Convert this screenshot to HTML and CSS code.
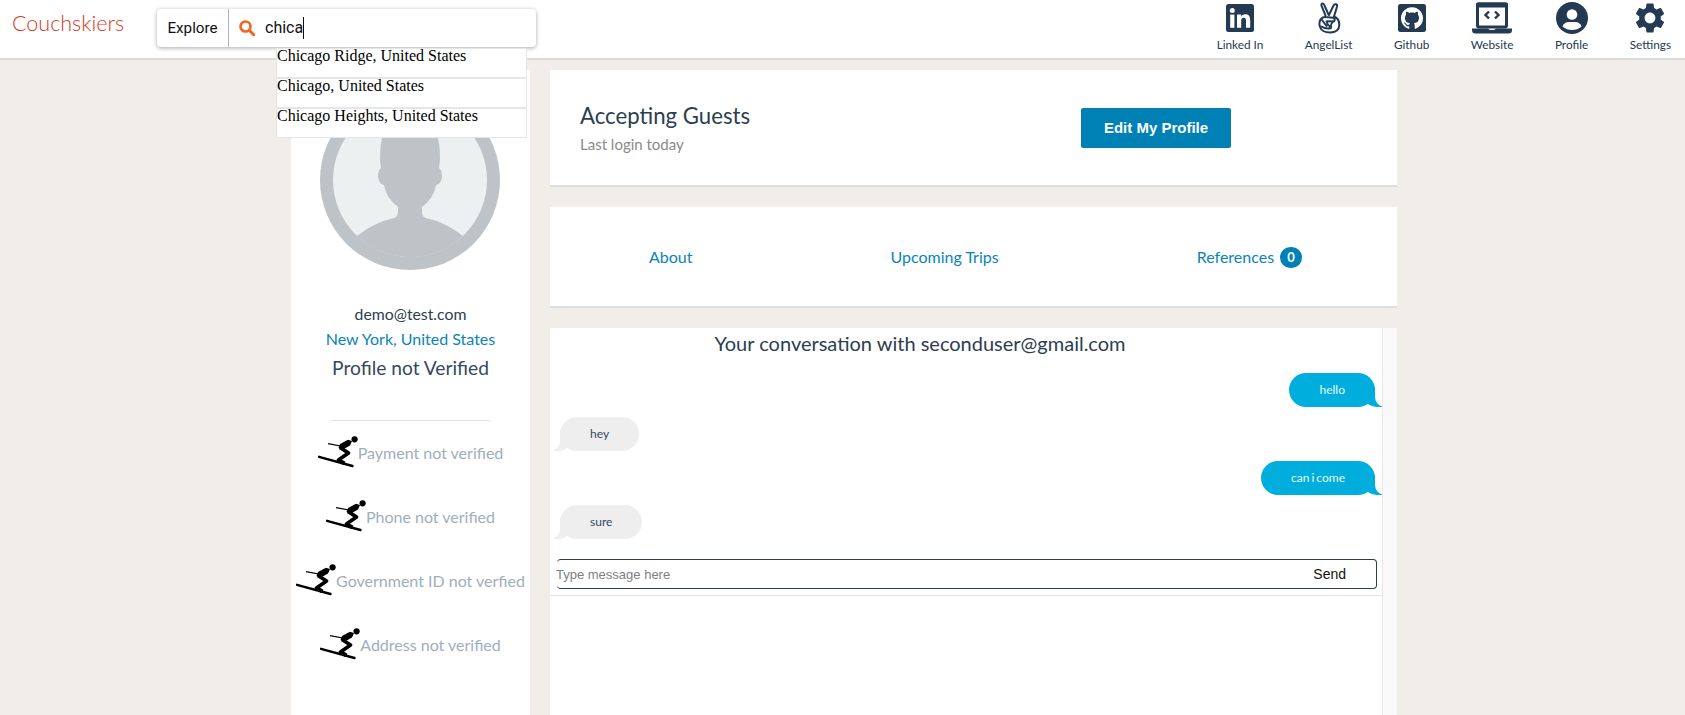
FILE: index.html
```html
<!DOCTYPE html>
<html lang="en">
<head>
    <meta charset="UTF-8">
    <meta name="viewport" content="width=device-width, initial-scale=1.0">
    <title>Couchskiers</title>
    <link rel="stylesheet" href="styles.css">
</head>
<body>
    <svg class="defs" width="0" height="0">
        <symbol id="skier" viewBox="0 0 40 32">
            <circle cx="36.6" cy="3.3" r="3.1"/>
            <path d="M1 20.8L34.5 30" stroke="#000" stroke-width="2.4" stroke-linecap="round" fill="none"/>
            <path d="M10 7.6L28 11" stroke="#000" stroke-width="1.2" fill="none"/>
            <path d="M34 5L32 9.5L25 13.5L20.5 12L22 8L30 3.8Z"/>
            <path d="M22 11.5L30.5 17L20.5 24L26.5 27.5" stroke="#000" stroke-width="3.8" stroke-linejoin="round" fill="none"/>
        </symbol>
    </svg>

    <header class="topbar">
        <a class="logo" href="#">Couchskiers</a>
        <div class="search">
            <span class="search-label">Explore</span>
            <svg class="search-icon" viewBox="0 0 16 16" width="16" height="16">
                <circle cx="6.5" cy="6.5" r="5" fill="none" stroke="#f26522" stroke-width="2.6"/>
                <path d="M10.3 10.3L15 15" stroke="#f26522" stroke-width="3" stroke-linecap="round"/>
            </svg>
            <span class="search-text">chica</span>
            <ul class="suggestions">
                <li>Chicago Ridge, United States</li>
                <li>Chicago, United States</li>
                <li>Chicago Heights, United States</li>
            </ul>
        </div>
        <nav class="icons">
            <a href="#">
                <svg viewBox="0 0 28 28" width="28" height="28">
                    <rect width="28" height="28" rx="2.5" fill="#233a52"/>
                    <g fill="#fff">
                        <rect x="4.2" y="10.6" width="4.2" height="13.2"/>
                        <circle cx="6.3" cy="6.4" r="2.5"/>
                        <path d="M11 10.6h4v1.9c.7-1.2 2.2-2.2 4.3-2.2 4 0 4.9 2.6 4.9 6.1v7.4H20v-6.6c0-1.6-.1-3.5-2.2-3.5-2.2 0-2.6 1.7-2.6 3.4v6.7H11z"/>
                    </g>
                </svg>
                <span>Linked In</span>
            </a>
            <a href="#">
                <svg viewBox="0 0 24 31" width="24" height="31">
                    <g fill="none" stroke="#233a52" stroke-width="2" stroke-linejoin="round" stroke-linecap="round">
                        <path d="M8.5 13L4.5 3.2Q4 1.2 5.5 1.1Q6.8 1 7.5 3L11.5 12"/>
                        <path d="M12 12.5L16.5 3Q17.3 1.2 19 1.8Q20.5 2.4 20 4.2L17 14"/>
                        <path d="M17 14Q22.5 16 22.3 22.5Q22 30 13 30Q5 30 3 24.5Q1.5 19.5 4 16.5Q6 14 9 14.5L16 15.2Q18.8 16.5 17 19L10.5 18.8"/>
                        <path d="M5 17.5Q7.5 21 9.5 23.5M9.5 19Q10 22 13 24M15.5 19.5Q13.5 22 14 25M4.5 24Q9 27 14 25.5"/>
                    </g>
                </svg>
                <span>AngelList</span>
            </a>
            <a href="#">
                <svg viewBox="0 0 28 28" width="28" height="28">
                    <rect width="28" height="28" rx="2.5" fill="#233a52"/>
                    <g transform="translate(3 3) scale(.917)">
                        <path fill="#fff" d="M12 .297c-6.63 0-12 5.373-12 12 0 5.303 3.438 9.8 8.205 11.385.6.113.82-.258.82-.577 0-.285-.01-1.04-.015-2.04-3.338.724-4.042-1.61-4.042-1.61C4.422 18.07 3.633 17.7 3.633 17.7c-1.087-.744.084-.729.084-.729 1.205.084 1.838 1.236 1.838 1.236 1.07 1.835 2.809 1.305 3.495.998.108-.776.417-1.305.76-1.605-2.665-.3-5.466-1.332-5.466-5.93 0-1.31.465-2.38 1.235-3.22-.135-.303-.54-1.523.105-3.176 0 0 1.005-.322 3.3 1.23.96-.267 1.98-.399 3-.405 1.02.006 2.04.138 3 .405 2.28-1.552 3.285-1.23 3.285-1.23.645 1.653.24 2.873.12 3.176.765.84 1.23 1.91 1.23 3.22 0 4.61-2.805 5.625-5.475 5.92.42.36.81 1.096.81 2.22 0 1.606-.015 2.896-.015 3.286 0 .315.21.69.825.57C20.565 22.092 24 17.592 24 12.297c0-6.627-5.373-12-12-12"/>
                    </g>
                </svg>
                <span>Github</span>
            </a>
            <a href="#">
                <svg viewBox="0 0 40 31" width="40" height="31">
                    <rect x="5.5" y="1.5" width="29" height="23" rx="1.5" fill="none" stroke="#233a52" stroke-width="3"/>
                    <rect x="4" y="0" width="32" height="5" rx="1.5" fill="#233a52"/>
                    <path d="M17 9L13.5 12.5L17 16M23 9L26.5 12.5L23 16" fill="none" stroke="#233a52" stroke-width="2.4"/>
                    <path d="M0 26h16q1 1.6 4 1.6t4-1.6h16v1.5q0 3.5-3.5 3.5h-33q-3.5 0-3.5-3.5z" fill="#233a52"/>
                </svg>
                <span>Website</span>
            </a>
            <a href="#">
                <svg viewBox="0 0 32 32" width="32" height="32">
                    <circle cx="16" cy="16" r="16" fill="#233a52"/>
                    <circle cx="16" cy="12.5" r="5.3" fill="#fff"/>
                    <path d="M6.5 24.5Q8 20 13 20h6q5 0 6.5 4.5Q21.5 28 16 28t-9.5-3.5z" fill="#fff"/>
                </svg>
                <span>Profile</span>
            </a>
            <a href="#">
                <svg viewBox="2 1.5 20 21" width="30" height="31">
                    <path fill="#233a52" fill-rule="evenodd" d="M19.14 12.94c.04-.3.06-.61.06-.94 0-.32-.02-.64-.07-.94l2.03-1.58c.18-.14.23-.41.12-.61l-1.92-3.32c-.12-.22-.37-.29-.59-.22l-2.39.96c-.5-.38-1.03-.7-1.62-.94l-.36-2.54c-.04-.24-.24-.41-.48-.41h-3.84c-.24 0-.43.17-.47.41l-.36 2.54c-.59.24-1.13.57-1.62.94l-2.39-.96c-.22-.08-.47 0-.59.22L2.74 8.87c-.12.21-.08.47.12.61l2.03 1.58c-.05.3-.09.63-.09.94s.02.64.07.94l-2.03 1.58c-.18.14-.23.41-.12.61l1.92 3.32c.12.22.37.29.59.22l2.39-.96c.5.38 1.03.7 1.62.94l.36 2.54c.05.24.24.41.48.41h3.84c.24 0 .44-.17.47-.41l.36-2.54c.59-.24 1.13-.56 1.62-.94l2.39.96c.22.08.47 0 .59-.22l1.92-3.32c.12-.22.07-.47-.12-.61l-2.01-1.58zM12 15.6c-1.98 0-3.6-1.62-3.6-3.6s1.62-3.6 3.6-3.6 3.6 1.62 3.6 3.6-1.62 3.6-3.6 3.6z"/>
                </svg>
                <span>Settings</span>
            </a>
        </nav>
    </header>

    <div class="page">
        <aside class="sidebar">
            <svg class="avatar" viewBox="0 0 180 180" width="180" height="180">
                <circle cx="90" cy="90" r="90" fill="#bdc3c7"/>
                <circle cx="90" cy="90" r="77" fill="#ecf0f1"/>
                <path fill="#bdc3c7" d="M37 146Q55 132 74 128Q78 127 78 122L78 117Q66 108 64 95Q59 94 58 87Q58 80 61 78L60 70Q60 50 64 44Q72 28 90 28Q108 28 116 44Q120 50 120 70L119 78Q122 80 122 87Q121 94 116 95Q114 108 102 117L102 122Q102 127 106 128Q125 132 143 146A77 77 0 0 1 37 146Z"/>
            </svg>
            <div class="email">demo@test.com</div>
            <a class="location" href="#">New York, United States</a>
            <div class="verified">Profile not Verified</div>
            <hr class="divider">
            <ul class="checks">
                <li><svg width="40" height="32"><use href="#skier"/></svg>Payment not verified</li>
                <li><svg width="40" height="32"><use href="#skier"/></svg>Phone not verified</li>
                <li><svg width="40" height="32"><use href="#skier"/></svg>Government ID not verfied</li>
                <li><svg width="40" height="32"><use href="#skier"/></svg>Address not verified</li>
            </ul>
        </aside>

        <main class="content">
            <section class="card status">
                <div>
                    <h2>Accepting Guests</h2>
                    <p>Last login today</p>
                </div>
                <button class="edit-btn">Edit My Profile</button>
            </section>

            <section class="card tabs">
                <a href="#">About</a>
                <a href="#">Upcoming Trips</a>
                <a href="#">References <span class="badge">0</span></a>
            </section>

            <section class="chat-card">
                <div class="chat">
                    <h3>Your conversation with seconduser@gmail.com</h3>
                    <div class="messages">
                        <div class="msg msg-out">hello</div>
                        <div class="msg msg-in">hey</div>
                        <div class="msg msg-out">can i come</div>
                        <div class="msg msg-in">sure</div>
                    </div>
                    <div class="composer">
                        <span class="placeholder">Type message here</span>
                        <span class="send">Send</span>
                    </div>
                </div>
                <div class="scrollbar"></div>
            </section>
        </main>
    </div>
</body>
</html>
```

FILE: styles.css
```css
html, body {
    height: 100%;
}

body {
    margin: 0;
    overflow: hidden;
    display: flex;
    flex-direction: column;
    background-color: #f1eeea;
    font-family: "Lato", sans-serif;
    color: #2c3e50;
}

a {
    text-decoration: none;
}

.defs {
    position: absolute;
}

/* top bar */
.topbar {
    height: 58px;
    flex: none;
    display: flex;
    align-items: flex-start;
    background-color: #fff;
    border-bottom: 2px solid #dcdcdc;
    position: relative;
    z-index: 2;
}

.logo {
    margin: 10px 0 0 12px;
    width: 145px;
    font-size: 21.5px;
    font-weight: 300;
    line-height: 26px;
    color: #d9381e;
}

.search {
    position: relative;
    width: 379px;
    height: 38px;
    margin-top: 9px;
    display: flex;
    align-items: center;
    background-color: #fff;
    border-radius: 4px;
    box-shadow: 0 1px 4px rgba(0, 0, 0, 0.35);
    font-family: "Roboto", sans-serif;
    font-size: 16px;
    color: #111;
}

.search-label {
    width: 71px;
    height: 100%;
    font-size: 15.2px;
    line-height: 38px;
    text-align: center;
    border-right: 1px solid #a9b4c0;
}

.search-icon {
    margin: 0 10px;
}

.search-text {
    border-right: 1px solid #111;
    line-height: 22px;
}

.suggestions {
    position: absolute;
    left: 119px;
    top: 39px;
    width: 251px;
    margin: 0;
    padding: 0;
    list-style: none;
    font-family: "Liberation Serif", serif;
    font-size: 16px;
    line-height: 13px;
    color: #000;
}

.suggestions li {
    box-sizing: border-box;
    height: 30px;
    background-color: #fff;
    border: 1px solid #e6e6e6;
}

.icons {
    margin-left: auto;
    padding-right: 14px;
    display: flex;
    gap: 41.4px;
}

.icons a {
    display: flex;
    flex-direction: column;
    align-items: center;
    height: 56px;
    color: #233a52;
    font-size: 11.8px;
}

.icons svg {
    height: 34px;
    padding-top: 2px;
    box-sizing: border-box;
}

.icons span {
    margin-top: 4px;
    line-height: 14px;
}

/* page columns */
.page {
    flex: 1;
    min-height: 0;
    display: flex;
    gap: 20px;
    padding: 10px 0 0 291px;
}

.sidebar {
    width: 239px;
    padding-top: 20px;
    display: flex;
    flex-direction: column;
    align-items: center;
    background-color: #fff;
}

.avatar {
    flex: none;
    margin: 0 2px 33px 0;
}

.email {
    font-size: 15.8px;
    line-height: 22px;
}

.location {
    margin-top: 3px;
    font-size: 16px;
    line-height: 22px;
    color: #0a84b8;
}

.verified {
    margin-top: 5px;
    font-size: 19.2px;
    line-height: 26px;
    color: #34495e;
}

.divider {
    width: 159px;
    margin: 39px 0 0;
    border: none;
    border-top: 1px solid #e3e3e3;
}

.checks {
    margin: -1px 0 0;
    padding: 0;
    list-style: none;
}

.checks li {
    height: 64px;
    display: flex;
    align-items: center;
    justify-content: center;
    font-size: 16px;
    color: #a0aebd;
    white-space: nowrap;
}

.content {
    width: 847px;
    display: flex;
    flex-direction: column;
}

/* cards */
.card {
    box-sizing: border-box;
    background-color: #fff;
    border-bottom: 2px solid #dcdfe2;
}

.status {
    height: 117px;
    margin-bottom: 20px;
    padding: 1px 0 0 30px;
    display: grid;
    grid-template-columns: 501px auto;
    align-items: center;
    justify-content: start;
}

.status h2 {
    margin: 0 0 4px;
    font-size: 22.2px;
    font-weight: 400;
    line-height: 28px;
    color: #2c3e50;
}

.status p {
    margin: 0;
    font-size: 15px;
    line-height: 20px;
    color: #8a8a8a;
}

.edit-btn {
    width: 150px;
    height: 40px;
    padding: 0 0 2px;
    background-color: #0081b6;
    color: #fff;
    border: none;
    border-radius: 2px;
    font-family: "Liberation Sans", sans-serif;
    font-size: 15px;
    font-weight: bold;
}

.tabs {
    height: 101px;
    margin-bottom: 20px;
    padding-left: 99px;
    display: flex;
    align-items: center;
    gap: 198px;
}

.tabs a {
    display: flex;
    align-items: center;
    gap: 6px;
    font-size: 16px;
    color: #0a84b8;
}

.badge {
    width: 22px;
    height: 21px;
    margin-top: 2px;
    border-radius: 11px;
    background-color: #0081b6;
    color: #fff;
    font-size: 13px;
    font-weight: bold;
    line-height: 21px;
    text-align: center;
}

/* chat */
.chat-card {
    flex: 1;
    display: flex;
    background-color: #fff;
}

.chat {
    width: 832px;
}

.chat h3 {
    margin: 0 0 14px;
    padding-right: 92px;
    font-size: 20px;
    font-weight: 400;
    line-height: 31px;
    text-align: center;
    color: #2c3e50;
}

.messages {
    display: flex;
    flex-direction: column;
    gap: 10px;
    padding: 0 7px 0 10px;
    overflow: hidden;
}

.msg {
    position: relative;
    height: 34px;
    padding: 0 30px;
    border-radius: 17px;
    font-size: 12px;
    line-height: 34px;
    word-spacing: -1px;
}

.msg::before,
.msg::after {
    content: "";
    position: absolute;
    bottom: 0;
    height: 20px;
}

.msg-out {
    align-self: flex-end;
    background-color: #00aedd;
    color: #eafaff;
}

.msg-out::before {
    right: -7px;
    width: 20px;
    background-color: #00aedd;
    border-bottom-left-radius: 15px;
}

.msg-out::after {
    right: -26px;
    width: 26px;
    background-color: #fff;
    border-bottom-left-radius: 10px;
}

.msg-in {
    align-self: flex-start;
    background-color: #eeeeee;
    color: #34495e;
}

.msg-in::before {
    left: -7px;
    width: 20px;
    background-color: #eeeeee;
    border-bottom-right-radius: 15px;
}

.msg-in::after {
    left: -26px;
    width: 26px;
    background-color: #fff;
    border-bottom-right-radius: 10px;
}

.composer {
    box-sizing: border-box;
    height: 30px;
    margin: 20px 5px 0 7px;
    padding: 0 30px 0 0;
    display: flex;
    align-items: center;
    justify-content: space-between;
    border: 1px solid #2c3e50;
    border-left: none;
    border-radius: 4px;
    font-family: "Liberation Sans", sans-serif;
    font-size: 14px;
}

.placeholder {
    margin-left: -1px;
    font-size: 13px;
    color: #808080;
}

.send {
    color: #111;
}

.chat::after {
    content: "";
    display: block;
    margin-top: 6px;
    border-top: 1px solid #e6e6e6;
}

.scrollbar {
    flex: 1;
    background-color: #f9f9f9;
    border-left: 1px solid #e8e8e8;
}
```
